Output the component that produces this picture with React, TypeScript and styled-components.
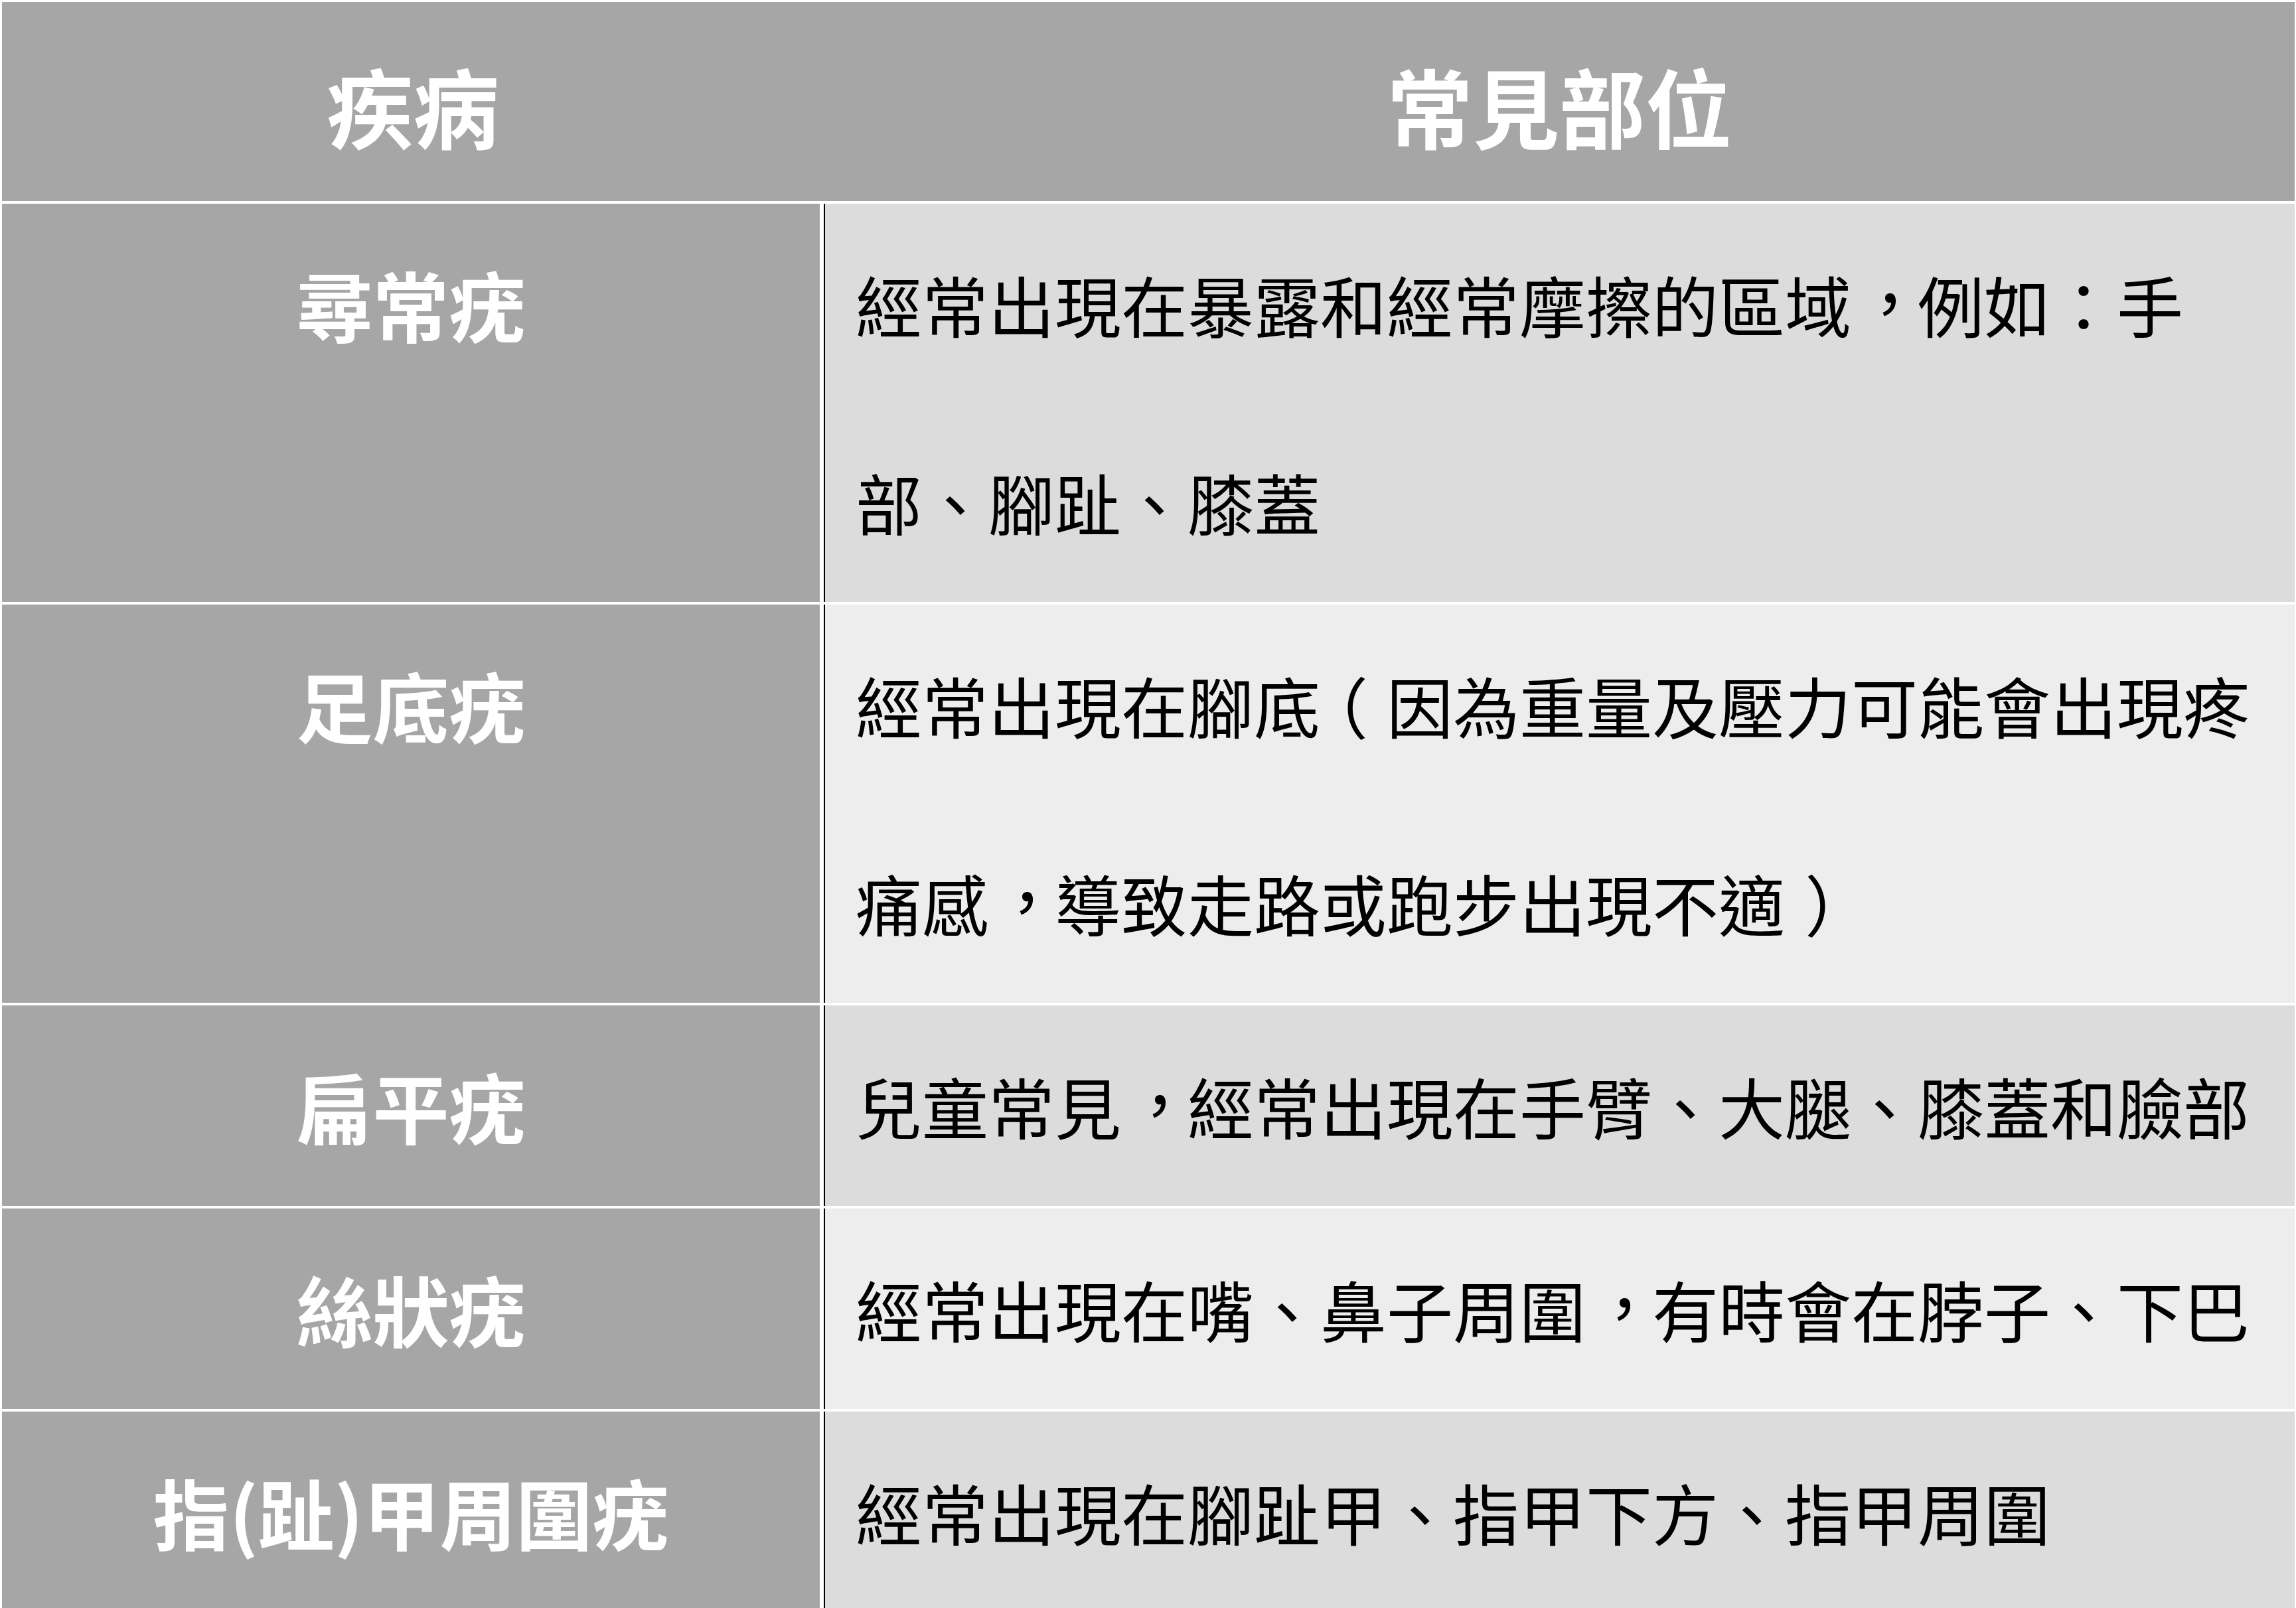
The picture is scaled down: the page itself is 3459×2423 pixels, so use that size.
import styled, { createGlobalStyle } from "styled-components";

const rows = [
  {
    name: "尋常疣",
    desc: "經常出現在暴露和經常摩擦的區域，例如：手部、腳趾、膝蓋",
  },
  {
    name: "足底疣",
    desc: "經常出現在腳底（因為重量及壓力可能會出現疼痛感，導致走路或跑步出現不適）",
  },
  {
    name: "扁平疣",
    desc: "兒童常見，經常出現在手臂、大腿、膝蓋和臉部",
  },
  {
    name: "絲狀疣",
    desc: "經常出現在嘴、鼻子周圍，有時會在脖子、下巴",
  },
  {
    name: "指(趾)甲周圍疣",
    desc: "經常出現在腳趾甲、指甲下方、指甲周圍",
  },
];

// punctuation drawn centred in its box, as Taiwanese typesetting does
const punctShift: Record<string, [number, number]> = {
  "，": [0.08, -0.06],
  "（": [-0.28, 0],
  "）": [0.3, 0],
};

function Desc({ text }: { text: string }) {
  return (
    <>
      {Array.from(text).map((ch, i) =>
        ch in punctShift ? (
          <Punct key={i} $dx={punctShift[ch][0]} $dy={punctShift[ch][1]}>
            {ch}
          </Punct>
        ) : (
          ch
        )
      )}
    </>
  );
}

export default function App() {
  return (
    <>
      <GlobalStyle />
      <TableWrapper lang="zh-TW">
        <HeaderRow>
          <HeadCell>疾病</HeadCell>
          <HeadCell>常見部位</HeadCell>
        </HeaderRow>
        {rows.map((row, i) => (
          <BodyRow key={row.name}>
            <NameCell>{row.name}</NameCell>
            <DescCell $light={i % 2 === 1}>
              <Desc text={row.desc} />
            </DescCell>
          </BodyRow>
        ))}
      </TableWrapper>
    </>
  );
}

const GlobalStyle = createGlobalStyle`
  html, body {
    margin: 0;
    padding: 0;
    background: #ffffff;
  }
  body {
    font-family: "Noto Sans CJK TC", "Noto Sans", sans-serif;
  }
`;

const TableWrapper = styled.div`
  display: flex;
  flex-direction: column;
  gap: 4px;
  padding: 3px 2px 0 3px;
  box-sizing: border-box;
  width: 3459px;
  background: #ffffff;
  font-family: "Noto Sans CJK TC", "Noto Sans", sans-serif;
`;

const HeaderRow = styled.div`
  display: grid;
  grid-template-columns: 1238px 1fr;
  height: 300px;
  background: #a6a6a6;
`;

const HeadCell = styled.div`
  display: flex;
  align-items: center;
  justify-content: center;
  padding-top: 8px;
  box-sizing: border-box;
  font-size: 130px;
  font-weight: 700;
  color: #ffffff;
  line-height: 1;
`;

const BodyRow = styled.div`
  display: grid;
  grid-template-columns: 1232px 1fr;
  column-gap: 6px;
`;

const NameCell = styled.div`
  background: #a6a6a6;
  color: #ffffff;
  font-size: 115px;
  font-weight: 700;
  line-height: 300px;
  text-align: center;
  white-space: nowrap;
`;

const DescCell = styled.div<{ $light: boolean }>`
  background: ${(p) => (p.$light ? "#ededed" : "#dcdcdc")};
  border-left: 2px solid #000000;
  padding: 2px 46px 2px 46px;
  color: #000000;
  font-size: 100px;
  font-weight: 400;
  line-height: 298px;
  line-break: strict;
`;

const Punct = styled.span<{ $dx: number; $dy: number }>`
  display: inline-block;
  transform: translate(${(p) => p.$dx}em, ${(p) => p.$dy}em);
`;
